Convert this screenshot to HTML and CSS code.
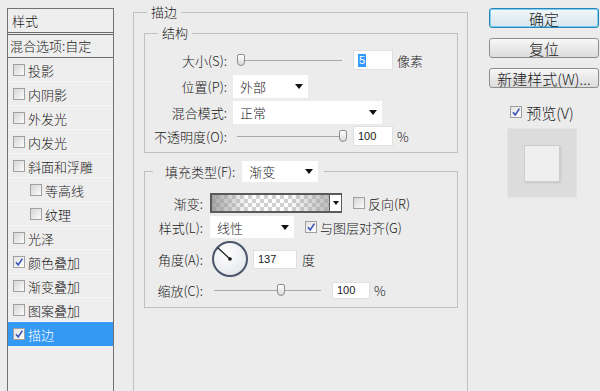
FILE: index.html
```html
<!DOCTYPE html>
<html lang="zh-CN">
<head>
    <meta charset="UTF-8">
    <meta name="viewport" content="width=device-width, initial-scale=1.0">
    <title>图层样式 - 描边</title>
    <link rel="stylesheet" href="styles.css">
</head>
<body>
    <div class="dialog">
        <aside class="styles-panel">
            <div class="panel-head">样式</div>
            <div class="panel-blend">混合选项:自定</div>
            <ul class="effect-list">
                <li><span class="cb"></span>投影</li>
                <li><span class="cb"></span>内阴影</li>
                <li><span class="cb"></span>外发光</li>
                <li><span class="cb"></span>内发光</li>
                <li><span class="cb"></span>斜面和浮雕</li>
                <li class="sub"><span class="cb"></span>等高线</li>
                <li class="sub"><span class="cb"></span>纹理</li>
                <li><span class="cb"></span>光泽</li>
                <li><span class="cb checked"><svg viewBox="0 0 10 10"><path d="M2 5.2 L4.2 8 L8.4 1.6"/></svg></span>颜色叠加</li>
                <li><span class="cb"></span>渐变叠加</li>
                <li><span class="cb"></span>图案叠加</li>
                <li class="selected"><span class="cb checked"><svg viewBox="0 0 10 10"><path d="M2 5.2 L4.2 8 L8.4 1.6"/></svg></span>描边</li>
            </ul>
        </aside>

        <div class="main">
            <fieldset class="stroke-group">
                <legend>描边</legend>

                <fieldset class="struct-group">
                    <legend>结构</legend>
                    <div class="row">
                        <label>大小(S):</label>
                        <div class="slider"><span class="thumb" style="left:4px"></span></div>
                        <span class="num"><span class="sel-text">5</span></span>
                        <span class="unit">像素</span>
                    </div>
                    <div class="row">
                        <label>位置(P):</label>
                        <div class="select pos-select">外部</div>
                    </div>
                    <div class="row">
                        <label>混合模式:</label>
                        <div class="select mode-select">正常</div>
                    </div>
                    <div class="row short">
                        <label>不透明度(O):</label>
                        <div class="slider"><span class="thumb" style="left:106px"></span></div>
                        <span class="num">100</span>
                        <span class="unit">%</span>
                    </div>
                </fieldset>

                <fieldset class="fill-group">
                    <legend>
                        <span class="legend-label">填充类型(F):</span>
                        <span class="select type-select">渐变</span>
                    </legend>
                    <div class="row grad-row">
                        <label>渐变:</label>
                        <div class="gradient-picker">
                            <span class="gradient-swatch"></span>
                            <span class="gradient-arrow"></span>
                        </div>
                        <span class="cb gap-cb"></span>
                        <span class="cb-label">反向(R)</span>
                    </div>
                    <div class="row style-row">
                        <label>样式(L):</label>
                        <div class="select style-select">线性</div>
                        <span class="cb checked gap-cb"><svg viewBox="0 0 10 10"><path d="M2 5.2 L4.2 8 L8.4 1.6"/></svg></span>
                        <span class="cb-label">与图层对齐(G)</span>
                    </div>
                    <div class="row angle-row">
                        <label>角度(A):</label>
                        <svg class="dial" viewBox="0 0 38 38">
                            <defs>
                                <radialGradient id="dialFill" cx="40%" cy="35%" r="70%">
                                    <stop offset="0" stop-color="#ffffff"/>
                                    <stop offset="1" stop-color="#e4e6ea"/>
                                </radialGradient>
                            </defs>
                            <circle cx="19" cy="19" r="17" fill="url(#dialFill)" stroke="#4b566c" stroke-width="2"/>
                            <line x1="19" y1="19" x2="6.5" y2="7.5" stroke="#222" stroke-width="1.3"/>
                            <circle cx="19" cy="19" r="1.8" fill="#111"/>
                        </svg>
                        <span class="num angle-num">137</span>
                        <span class="unit">度</span>
                    </div>
                    <div class="row scale-row">
                        <label>缩放(C):</label>
                        <div class="slider scale-slider"><span class="thumb" style="left:67px"></span></div>
                        <span class="num scale-num">100</span>
                        <span class="unit">%</span>
                    </div>
                </fieldset>
            </fieldset>
        </div>

        <div class="side">
            <button class="btn btn-default">确定</button>
            <button class="btn">复位</button>
            <button class="btn">新建样式(W)...</button>
            <div class="preview-check">
                <span class="cb checked"><svg viewBox="0 0 10 10"><path d="M2 5.2 L4.2 8 L8.4 1.6"/></svg></span>
                <span>预览(V)</span>
            </div>
            <div class="preview-box"><div class="preview-inner"></div></div>
        </div>
    </div>
</body>
</html>
```

FILE: styles.css
```css
body {
    margin: 0;
    height: 391px;
    overflow: hidden;
    background-color: #ececec;
    font-family: "Noto Sans CJK SC", "Liberation Sans", sans-serif;
    font-size: 13px;
    font-weight: 300;
    color: #1a1a1a;
}
.dialog {
    display: flex;
    align-items: flex-start;
    padding-left: 7px;
}

/* left list of effects */
.styles-panel {
    width: 107px;
    height: 383px;
    margin-top: 8px;
    box-sizing: border-box;
    border: 1px solid #727272;
    border-bottom: 0;
    background: #eeeeee;
}
.panel-head {
    height: 23px;
    line-height: 23px;
    padding-left: 4px;
    border-bottom: 3px double #6a6a6a;
}
.panel-blend {
    height: 22px;
    line-height: 22px;
    padding-left: 2px;
    border-bottom: 1px solid #6a6a6a;
}
.effect-list {
    list-style: none;
    margin: 0;
    padding: 0;
}
.effect-list li {
    display: flex;
    align-items: center;
    height: 24px;
    padding-left: 5px;
    box-shadow: inset 0 -1px 0 #f7f7f7;
}
.effect-list li.sub {
    padding-left: 22px;
}
.effect-list li.selected {
    background: #3399f3;
    color: #fff;
    box-shadow: none;
}

/* checkboxes */
.cb {
    display: inline-flex;
    flex-shrink: 0;
    width: 12px;
    height: 12px;
    box-sizing: border-box;
    margin-right: 3px;
    border: 1px solid #a0a0a0;
    background: linear-gradient(135deg, #d6d6d6, #fbfbfb);
}
.cb svg {
    width: 10px;
    height: 10px;
}
.cb svg path {
    fill: none;
    stroke: #3553b8;
    stroke-width: 1.6;
}
.cb.checked {
    background: linear-gradient(135deg, #e3e3e3, #ffffff);
}

/* main panel */
.main {
    width: 335px;
    margin-left: 19px;
    margin-top: 4px;
}
fieldset {
    margin: 0;
    min-width: 0;
    border: 1px solid #c0c0c0;
}
legend {
    line-height: 16px;
    padding: 0 4px;
}
.stroke-group {
    height: 387px;
    box-sizing: border-box;
    padding: 5px 9px 0 10px;
    border-bottom: 0;
}
.stroke-group > legend {
    margin-left: 3px;
}
.struct-group {
    padding: 6px 0 5px;
}
.struct-group > legend {
    margin-left: 13px;
}
.row {
    display: flex;
    align-items: center;
    height: 26px;
}
.row.short {
    height: 22px;
}
.struct-group label {
    width: 82px;
    margin-right: 6px;
    text-align: right;
}
.fill-group {
    margin-top: 8px;
    padding: 10px 0 5px;
}
.fill-group > legend {
    display: flex;
    align-items: center;
    margin-left: 8px;
    padding: 0 6px 0 12px;
}
.legend-label {
    margin-right: 7px;
}
.fill-group label {
    width: 58px;
    margin-right: 7px;
    text-align: right;
}
.grad-row {
    height: 22px;
}
.angle-row {
    height: 38px;
}
.scale-row {
    height: 24px;
}

/* sliders */
.slider {
    position: relative;
    width: 113px;
    height: 16px;
    background: linear-gradient(#a8a8a8, #a8a8a8) no-repeat center / calc(100% - 8px) 1px;
}
.scale-slider {
    width: 115px;
}
.thumb {
    position: absolute;
    top: 2px;
    width: 8px;
    height: 12px;
    box-sizing: border-box;
    border: 1px solid #8c8c8c;
    border-radius: 2px 2px 4px 4px;
    background: linear-gradient(#ffffff, #d9d9d9);
}

/* text fields */
.num {
    display: inline-flex;
    align-items: center;
    width: 40px;
    height: 20px;
    box-sizing: border-box;
    margin-left: 7px;
    padding-left: 4px;
    background: #fff;
    border: 1px solid #e0e0e0;
    font-family: "Liberation Sans", Arial, sans-serif;
    font-size: 11px;
    font-weight: 400;
}
.sel-text {
    background: #3399ff;
    color: #fff;
    padding: 0 1px;
    line-height: 13px;
}
.angle-num {
    width: 44px;
    height: 19px;
    margin-left: 4px;
}
.scale-num {
    width: 38px;
    height: 17px;
}
.unit {
    margin-left: 4px;
}
.angle-row .unit {
    margin-left: 5px;
}

/* dropdowns */
.select {
    display: flex;
    align-items: center;
    justify-content: space-between;
    height: 23px;
    box-sizing: border-box;
    padding: 0 5px 0 7px;
    background: #fff;
}
.select::after {
    content: "";
    border-left: 4px solid transparent;
    border-right: 4px solid transparent;
    border-top: 5px solid #111;
}
.pos-select {
    width: 75px;
}
.mode-select {
    width: 149px;
}
.type-select {
    width: 76px;
    height: 21px;
}
.style-select {
    width: 84px;
    height: 22px;
}

/* gradient picker */
.gradient-picker {
    display: flex;
    width: 132px;
    height: 20px;
    box-sizing: border-box;
    border: 2px solid #5a5a5a;
    border-right-width: 1px;
}
.gradient-swatch {
    flex: 1;
    background:
        linear-gradient(90deg, rgba(150,150,150,0.85), rgba(210,210,210,0.1) 30%, rgba(210,210,210,0) 65%, rgba(160,160,160,0.7)),
        repeating-conic-gradient(#d0d0d0 0 25%, #ffffff 0 50%) 0 0 / 8px 8px;
}
.gradient-arrow {
    display: flex;
    align-items: center;
    justify-content: center;
    width: 11px;
    border-left: 1px solid #5a5a5a;
    background: #fff;
}
.gradient-arrow::after {
    content: "";
    border-left: 3px solid transparent;
    border-right: 3px solid transparent;
    border-top: 4px solid #111;
}
.gap-cb {
    margin-left: 11px;
}
.dial {
    width: 38px;
    height: 38px;
    margin-left: 1px;
}

/* right column */
.side {
    display: flex;
    flex-direction: column;
    width: 110px;
    margin-left: 21px;
    margin-top: 8px;
    font-size: 15px;
}
.btn {
    height: 20px;
    margin: 0 0 10px;
    padding: 0;
    box-sizing: border-box;
    border: 1px solid #8d8d8d;
    border-radius: 3px;
    background: linear-gradient(#f8f8f8, #e9e9e9 50%, #dcdcdc);
    font-family: inherit;
    font-size: 15px;
    font-weight: 300;
    line-height: 17px;
    color: #1a1a1a;
}
.btn-default {
    border-color: #2b84b8;
    box-shadow: inset 0 0 0 1px #7ed0f3;
    background: linear-gradient(#f2f8fb, #e4eef3 50%, #d6e5ee);
}
.preview-check {
    display: flex;
    align-items: center;
    justify-content: center;
    height: 18px;
    margin-top: 5px;
    padding-right: 4px;
}
.preview-check .cb {
    margin-right: 4px;
}
.preview-box {
    display: flex;
    align-items: center;
    justify-content: center;
    width: 70px;
    height: 70px;
    margin: 7px 0 0 18px;
    background: #dcdcdc;
    box-shadow: inset 0 0 0 1px #e3e3e3;
}
.preview-inner {
    width: 36px;
    height: 37px;
    box-sizing: border-box;
    border: 1px solid #cdcdcd;
    background: #efefef;
    box-shadow: 1px 1px 2px rgba(0, 0, 0, 0.1);
}
```
